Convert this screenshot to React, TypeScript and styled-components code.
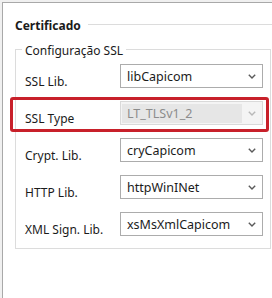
import React from 'react';
import styled, { createGlobalStyle } from 'styled-components';

const GlobalStyle = createGlobalStyle`
  html, body {
    margin: 0;
    padding: 0;
    background: #f0f0f0;
  }
  body {
    font-family: "Noto Sans", "Open Sans", sans-serif;
    color: #1b1b1b;
  }
  #root {
    width: 272px;
    height: 298px;
    overflow: hidden;
  }
`;

const Page = styled.div`
  padding: 2px 0 0 2px;
  height: 298px;
  box-sizing: border-box;
`;

const TabSheet = styled.div`
  background: #ffffff;
  border-top: 1px solid #a9a9a9;
  border-left: 1px solid #a9a9a9;
  height: 100%;
  box-sizing: border-box;
  padding-top: 15px;
`;

const GroupHeader = styled.div`
  display: flex;
  align-items: flex-start;
  gap: 7px;
  padding-left: 12px;
  height: 16px;
`;

const GroupTitle = styled.span`
  font-size: 12px;
  font-weight: 700;
  line-height: 16px;
`;

const GroupLine = styled.div`
  flex: 1;
  height: 1px;
  margin-top: 6px;
  background: #dcdcdc;
`;

const Box = styled.fieldset`
  margin: 5px 0 0 12px;
  width: 256px;
  box-sizing: border-box;
  border: 1px solid #dcdcdc;
  padding: 1px 0 5px 0;
  min-inline-size: 0;
`;

const BoxLegend = styled.legend`
  margin-left: 6px;
  padding: 4px 3px 0 3px;
  font-size: 12px;
  line-height: 16px;
  color: #1b1b1b;
`;

const Rows = styled.div`
  display: flex;
  flex-direction: column;
  gap: 2px;
  margin-left: -6px;
`;

const Row = styled.div<{ $highlight?: boolean }>`
  display: grid;
  grid-template-columns: 95px 143px;
  width: 259px;
  box-sizing: border-box;
  padding: 1px 3px 2px 12px;
  border: 3px solid ${p => (p.$highlight ? '#c8202a' : 'transparent')};
  border-radius: 3px;
`;

const Label = styled.span`
  font-size: 12px;
  line-height: 16px;
  padding-top: 10px;
  white-space: nowrap;
`;

const Combo = styled.div<{ $disabled?: boolean }>`
  height: 24px;
  box-sizing: border-box;
  border: 1px solid ${p => (p.$disabled ? '#d9d9d9' : '#acacac')};
  background: ${p => (p.$disabled ? '#f4f4f4' : '#ffffff')};
  display: flex;
  align-items: stretch;
`;

const ComboText = styled.span<{ $disabled?: boolean }>`
  flex: 1;
  display: flex;
  align-items: center;
  margin: ${p => (p.$disabled ? '2px 0 1px 1px' : '0')};
  padding-left: ${p => (p.$disabled ? '5px' : '6px')};
  background: ${p => (p.$disabled ? '#e6e6e6' : 'transparent')};
  color: ${p => (p.$disabled ? '#8c8c8c' : '#1b1b1b')};
  font-size: 12.5px;
  white-space: nowrap;
`;

const Arrow = styled.span`
  width: 20px;
  display: flex;
  align-items: center;
  justify-content: center;
`;

const Chevron = ({ color }: { color: string }) => (
  <svg width="8" height="5" viewBox="0 0 8 5">
    <path d="M0.8 0.8 L4 4 L7.2 0.8" fill="none" stroke={color} strokeWidth="1.4" />
  </svg>
);

const fields = [
  { label: 'SSL Lib.', value: 'libCapicom' },
  { label: 'SSL Type', value: 'LT_TLSv1_2', disabled: true, highlight: true },
  { label: 'Crypt. Lib.', value: 'cryCapicom' },
  { label: 'HTTP Lib.', value: 'httpWinINet' },
  { label: 'XML Sign. Lib.', value: 'xsMsXmlCapicom' },
];

export default function App() {
  return (
    <>
      <GlobalStyle />
      <Page>
        <TabSheet>
          <GroupHeader>
            <GroupTitle>Certificado</GroupTitle>
            <GroupLine />
          </GroupHeader>
          <Box>
            <BoxLegend>Configuração SSL</BoxLegend>
            <Rows>
              {fields.map(f => (
                <Row key={f.label} $highlight={f.highlight}>
                  <Label>{f.label}</Label>
                  <Combo $disabled={f.disabled}>
                    <ComboText $disabled={f.disabled}>{f.value}</ComboText>
                    <Arrow>
                      <Chevron color={f.disabled ? '#b8b8b8' : '#5a5a5a'} />
                    </Arrow>
                  </Combo>
                </Row>
              ))}
            </Rows>
          </Box>
        </TabSheet>
      </Page>
    </>
  );
}
